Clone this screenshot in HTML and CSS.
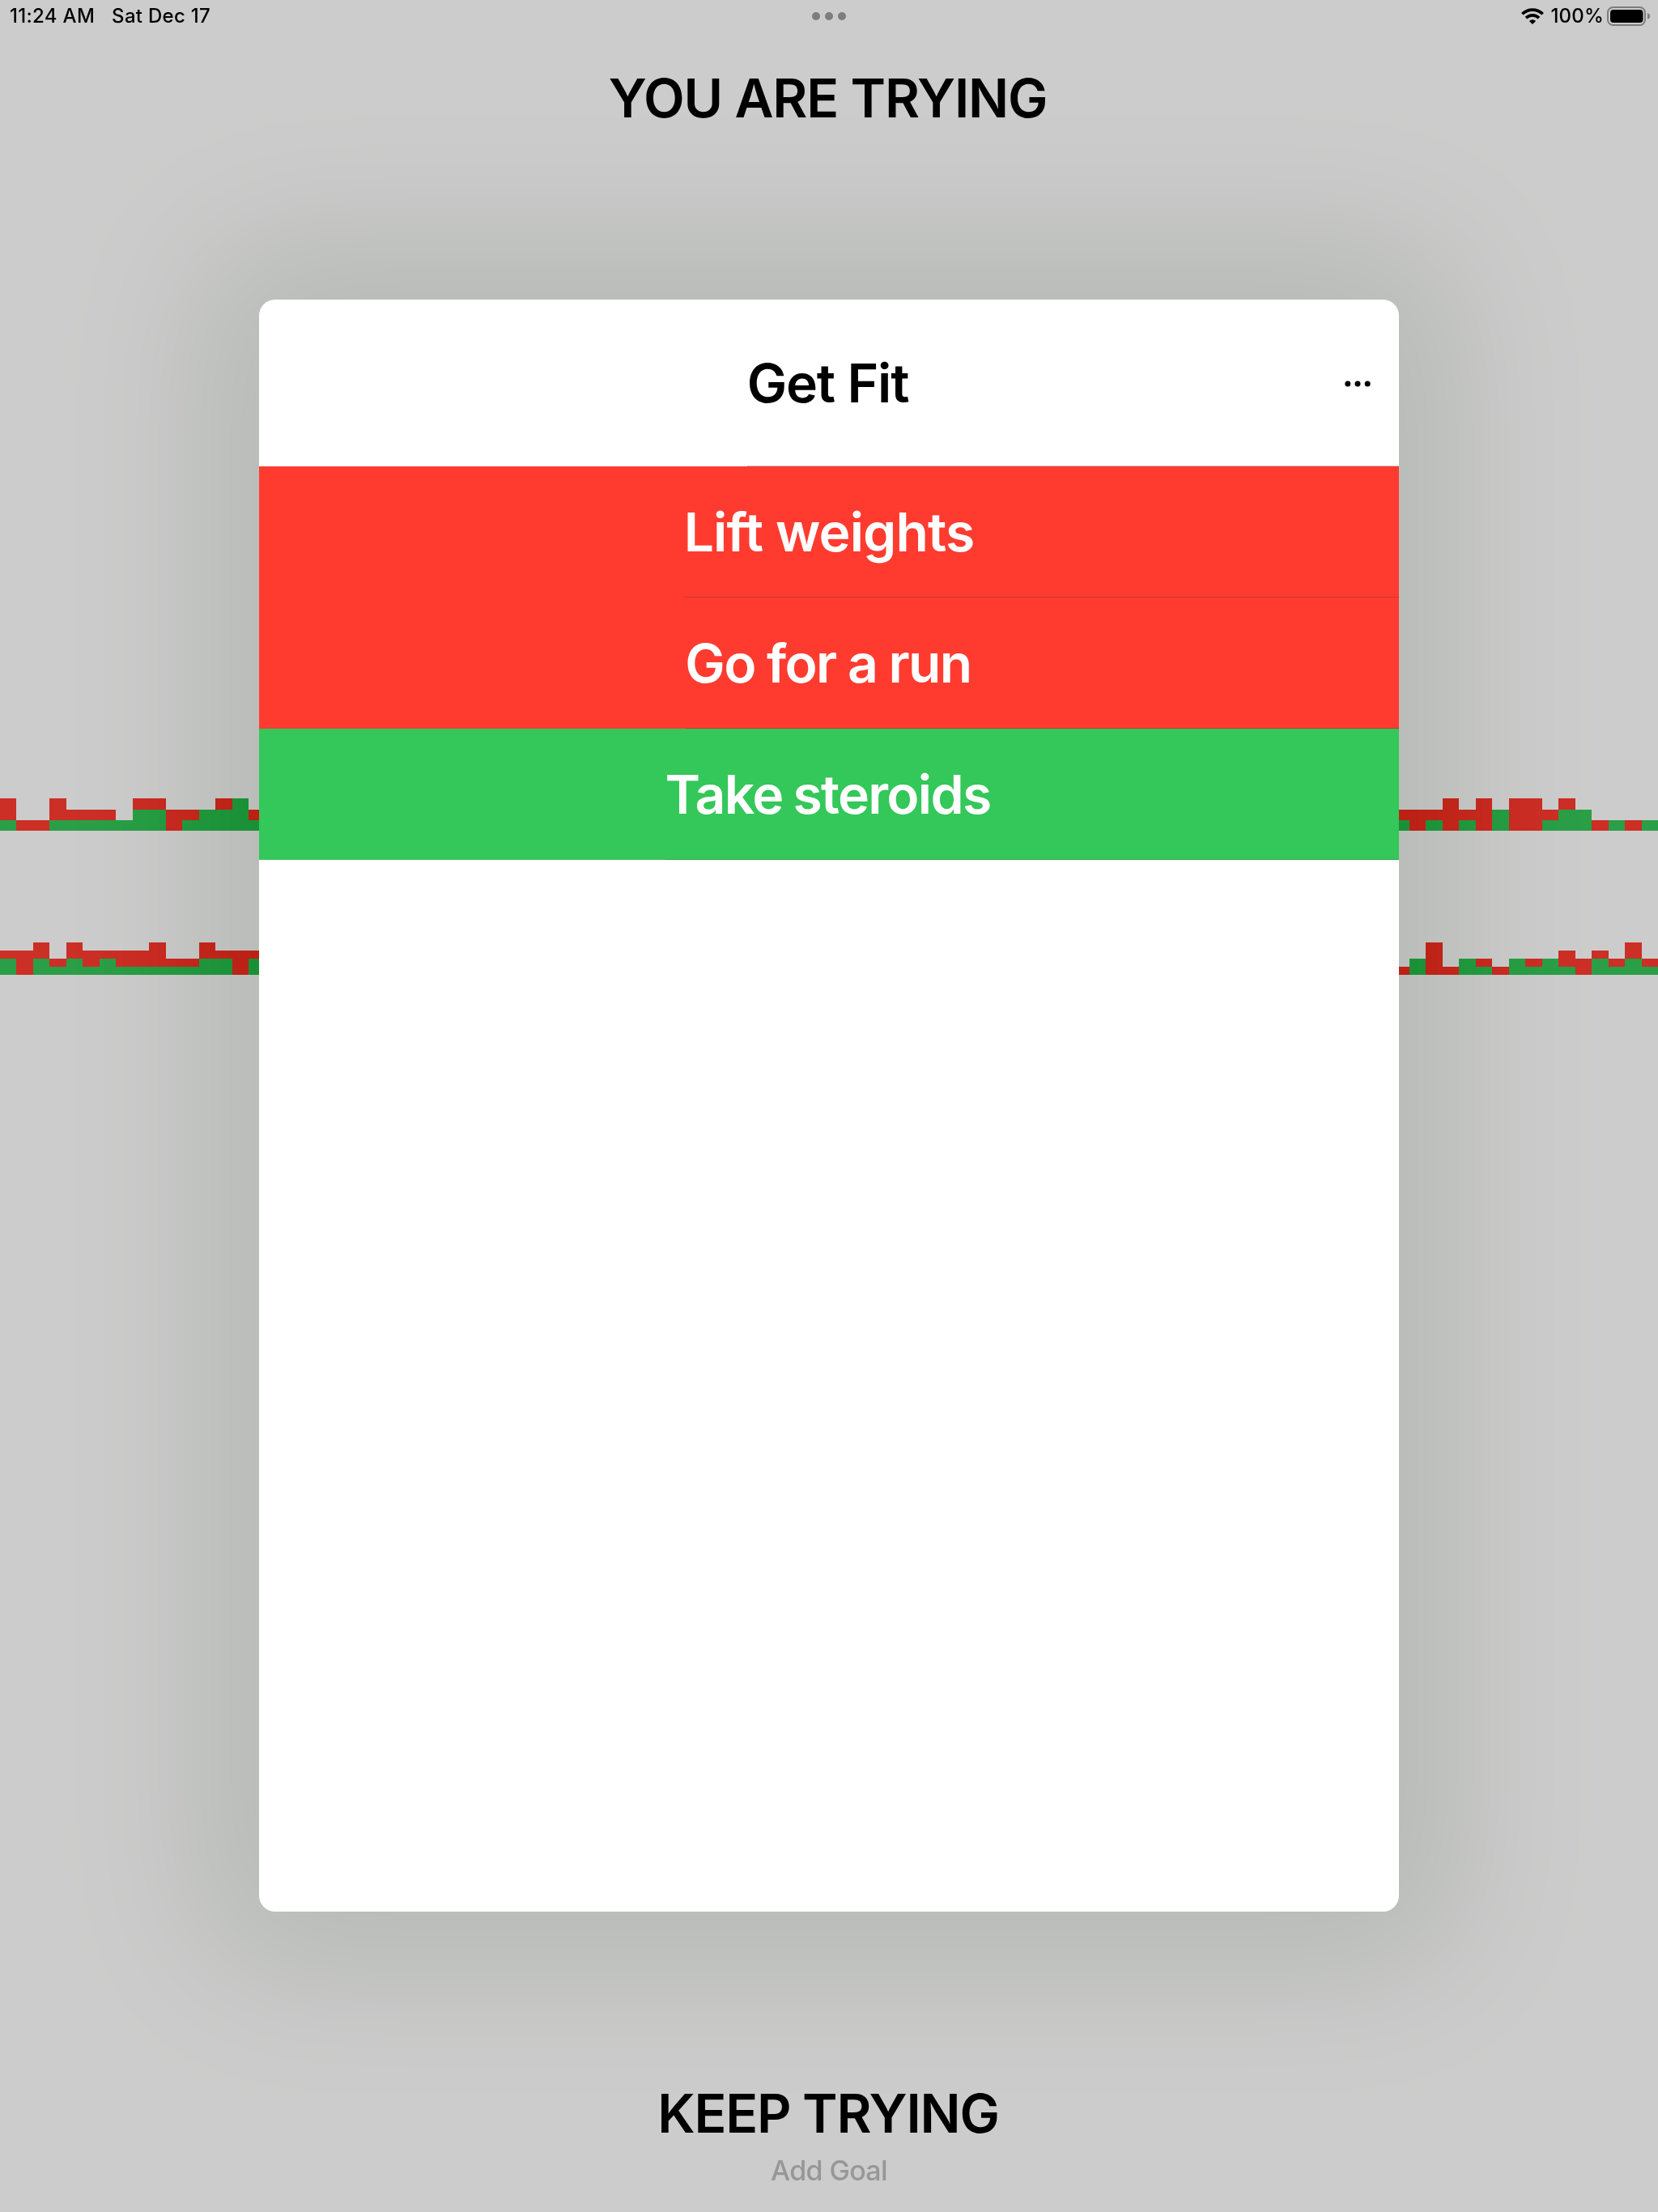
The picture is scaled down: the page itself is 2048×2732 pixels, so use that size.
FILE: index.html
```html
<!DOCTYPE html>
<html lang="en">
<head>
<meta charset="utf-8">
<title>You Are Trying</title>
<link rel="stylesheet" href="styles.css">
</head>
<body>
<div class="screen">
  <header class="status">
    <div class="status-left"><span class="time">11:24 AM</span><span class="date">Sat Dec 17</span></div>
    <div class="multitask"><i></i><i></i><i></i></div>
    <div class="status-right">
      <svg class="wifi" width="28" height="20" viewBox="0 0 28 20">
        <g fill="none" stroke="#000" stroke-width="3.7">
          <path d="M1.3 7.3a18 18 0 0 1 25.4 0"/>
          <path d="M6 12.1a11.3 11.3 0 0 1 16 0"/>
        </g>
        <path d="M14 20l-4.1-4.1a5.8 5.8 0 0 1 8.2 0z"/>
      </svg>
      <span class="percent">100%</span>
      <svg class="battery" width="54" height="24" viewBox="0 0 54 24">
        <rect x="1" y="1" width="46" height="22" rx="6.5" fill="none" stroke="#7d7d7d" stroke-width="2"/>
        <rect x="4" y="4" width="40.5" height="16" rx="4" fill="#000"/>
        <path d="M50 8c4 1.3 4 6.7 0 8z" fill="#7d7d7d"/>
      </svg>
    </div>
  </header>
  <h1 class="title">YOU ARE TRYING</h1>
  <main class="charts">
    <div class="chart" data-levels="0 13 26 40"
      data-left="12 01 01 12 11 11 11 10 21 21 02 11 20 21 30 11"
      data-right="11 02 11 03 11 03 20 03 03 11 21 20 01 10 01 10"></div>
    <div class="chart" data-levels="0 10 20 30 40"
      data-left="21 03 22 11 22 12 21 12 12 13 11 11 22 21 03 21"
      data-right="01 20 04 01 20 11 01 20 11 20 12 02 21 11 22 11"></div>
  </main>
  <footer class="footer">
    <h2 class="keep">KEEP TRYING</h2>
    <button class="add">Add Goal</button>
  </footer>
  <div class="shadow"></div>
  <section class="sheet">
    <div class="sheet-head">
      <h2 class="goal">Get Fit</h2>
      <svg class="more" width="32" height="8" viewBox="0 0 32 8"><circle cx="3.8" cy="4" r="3.5"/><circle cx="16" cy="4" r="3.5"/><circle cx="28.2" cy="4" r="3.5"/></svg>
    </div>
    <div class="task missed lift"><span>Lift weights</span></div>
    <div class="task missed run"><span>Go for a run</span></div>
    <div class="task done steroids"><span>Take steroids</span></div>
  </section>
</div>
<script src="charts.js"></script>
</body>
</html>
```
FILE: charts.js
```js
// Each day is two digits: tasks done, tasks missed.
document.querySelectorAll('.chart').forEach(function (chart) {
  var levels = chart.dataset.levels.split(' ').map(Number);
  function half(days) {
    var group = document.createElement('div');
    group.className = 'days';
    days.split(' ').forEach(function (day) {
      var done = Number(day[0]), total = done + Number(day[1]);
      var col = document.createElement('div');
      col.className = 'day';
      [['bar-missed', levels[total] - levels[done]], ['bar-done', levels[done]]].forEach(function (part) {
        var bar = document.createElement('div');
        bar.className = part[0];
        bar.style.height = part[1] + 'px';
        col.appendChild(bar);
      });
      group.appendChild(col);
    });
    chart.appendChild(group);
  }
  half(chart.dataset.left);
  half(chart.dataset.right);
});
```
FILE: styles.css
```css
* { box-sizing: border-box; }
body { margin: 0; font-family: Inter, "Liberation Sans", sans-serif; color: #000; }
h1, h2 { margin: 0; font-weight: 600; font-size: 66px; line-height: 80px; letter-spacing: -1.15px; white-space: nowrap; }
.screen {
  position: relative;
  width: 2048px;
  height: 2732px;
  overflow: hidden;
  background: #ccc;
  display: flex;
  flex-direction: column;
  isolation: isolate;
}

.status {
  height: 40px;
  padding: 0 9px;
  display: grid;
  grid-template-columns: 1fr auto 1fr;
  align-items: center;
  font-size: 24px;
  font-weight: 500;
  letter-spacing: 0.3px;
  line-height: 40px;
  white-space: nowrap;
}
.status-left { display: flex; gap: 21px; padding-left: 3px; }
.multitask { display: flex; gap: 6px; }
.multitask i { width: 10px; height: 10px; border-radius: 50%; background: #7d7d7d; }
.status-right { display: flex; justify-content: flex-end; align-items: center; }
.percent { margin: 0 4px 0 8px; letter-spacing: 0.2px; }

.title { margin-top: 41px; padding-right: 3px; text-align: center; }

.charts { margin-top: 825px; display: flex; flex-direction: column; gap: 138px; }
.chart { height: 40px; display: flex; justify-content: space-between; }
.days { display: flex; height: 40px; }
.day { width: 20.48px; display: flex; flex-direction: column; justify-content: flex-end; }
.bar-missed { background: #cc2f26; }
.bar-done { background: #2a9f47; }

.footer { margin-top: auto; height: 162px; display: flex; flex-direction: column; align-items: center; }
.keep { padding-right: 2px; word-spacing: -1px; }
.add {
  border: 0; padding: 0; background: none; color: #979797;
  font: 500 34px/40px Inter, "Liberation Sans", sans-serif;
  letter-spacing: -0.65px;
  margin-top: 11px;
}

/* The shadow subtracts from the page, so the bars darken by the same amount. */
.shadow {
  position: absolute;
  left: 320px; top: 370px; width: 1408px; height: 1991px;
  border-radius: 20px;
  box-shadow: 0 0 190px 72px rgb(23, 20, 24);
  mix-blend-mode: difference;
}
.sheet {
  position: absolute;
  left: 320px; top: 370px; width: 1408px; height: 1991px;
  border-radius: 20px;
  background: #fff;
  overflow: hidden;
}
.sheet-head {
  height: 206px;
  display: grid;
  grid-template-columns: 1fr auto 1fr;
  align-items: center;
  padding: 0 35px;
  background: linear-gradient(#c6c6c8, #c6c6c8) right bottom / 805px 1px no-repeat;
}
.goal { grid-column: 2; padding-right: 3px; }
.more { justify-self: end; margin-top: 2px; }
.task {
  height: 162px;
  display: flex;
  align-items: center;
  justify-content: center;
  color: #fff;
  font-size: 66px;
  font-weight: 600;
  line-height: 80px;
  white-space: nowrap;
  background-repeat: no-repeat;
  background-position: right bottom;
}
.missed { background-color: #ff3b30; background-image: linear-gradient(#c53a34, #c53a34); }
.done { background-color: #34c759; background-image: linear-gradient(#35a352, #35a352); }
.lift { background-size: 883px 1px; letter-spacing: -0.87px; }
.run { background-size: 881px 1px; padding-right: 2px; letter-spacing: -1.6px; word-spacing: -0.8px; }
.steroids { background-size: 906px 1px; padding-right: 3px; letter-spacing: -1.7px; word-spacing: -2px; }
```
